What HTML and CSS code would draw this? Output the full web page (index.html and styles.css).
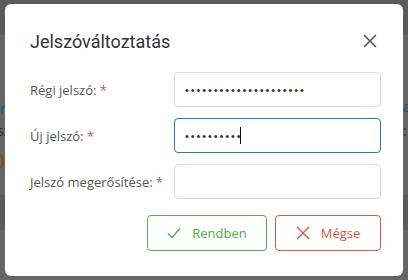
FILE: index.html
```html
<!DOCTYPE html>
<html lang="hu">
<head>
  <meta charset="UTF-8">
  <meta name="viewport" content="width=device-width, initial-scale=1.0">
  <title>Jelszóváltoztatás</title>
  <link rel="stylesheet" href="styles.css">
</head>
<body>
  <!-- page behind the backdrop -->
  <div class="page">
    <div class="band band-top"></div>
    <div class="band band-main">
      <span class="frag frag-l1">r</span>
      <span class="frag frag-l2">sz</span>
      <span class="frag frag-l3">)</span>
      <span class="frag frag-r1">a</span>
      <span class="frag frag-r2">:</span>
    </div>
    <div class="band band-mid"></div>
    <div class="band band-bottom"></div>
  </div>

  <div class="modal">
    <div class="modal-header">
      <h2 class="modal-title">Jelszóváltoztatás</h2>
      <button class="close" type="button" aria-label="Bezárás">
        <svg width="14" height="14" viewBox="0 0 14 14"><path d="M1 1L13 13M13 1L1 13" stroke="#555" stroke-width="1.6" fill="none"/></svg>
      </button>
    </div>
    <form class="form">
      <div class="row">
        <label for="oldPw">Régi jelszó: <span class="req">*</span></label>
        <input id="oldPw" class="field" type="password" value="aaaaaaaaaaaaaaaaaaaaa">
      </div>
      <div class="row">
        <label for="newPw">Új jelszó: <span class="req">*</span></label>
        <div class="field-wrap">
          <input id="newPw" class="field focused" type="password" value="aaaaaaaaaa">
          <span class="caret"></span>
        </div>
      </div>
      <div class="row">
        <label for="confirmPw">Jelszó megerősítése: <span class="req">*</span></label>
        <input id="confirmPw" class="field" type="password" value="">
      </div>
      <div class="actions">
        <button type="button" class="btn btn-ok">
          <svg width="14" height="12" viewBox="0 0 14 12"><path d="M1 6.5L5 10.5L13 1.5" stroke="#4cae4c" stroke-width="1.4" fill="none"/></svg>
          Rendben
        </button>
        <button type="button" class="btn btn-cancel">
          <svg width="14" height="14" viewBox="0 0 14 14"><path d="M1 1L13 13M13 1L1 13" stroke="#d9534f" stroke-width="1.4" fill="none"/></svg>
          Mégse
        </button>
      </div>
    </form>
  </div>
</body>
</html>
```

FILE: styles.css
```css
html, body { margin: 0; height: 100%; }
body {
  background: #666;
  font-family: "Open Sans", "Noto Sans", sans-serif;
  overflow: hidden;
}
.page { display: flex; flex-direction: column; height: 280px; }
.band { position: relative; }
.band-top { height: 35px; background: #5c5c5c; }
.band-main { height: 160px; background: #666; }
.band-mid { height: 35px; background: #5c5c5c; }
.band-bottom { flex: 1; background: #666; }
.frag { position: absolute; font-size: 14px; line-height: 16px; }
.frag-l1 { left: 0; top: 66px; color: #1f4f6e; }
.frag-l2 { left: -3px; top: 88px; color: #2b2b2b; }
.frag-l3 { left: 0; top: 117px; color: #6b4a12; }
.frag-r1 { left: 403px; top: 64px; color: #244f66; }
.frag-r2 { left: 403px; top: 88px; color: #2a2140; }

.modal {
  position: absolute;
  left: 5px; top: 4px;
  width: 398px; height: 272px;
  box-sizing: border-box;
  background: #fff;
  border-radius: 6px;
  padding: 25px 22px 0 25px;
}
.modal-header {
  display: flex; align-items: center; justify-content: space-between;
  height: 24px;
}
.modal-title {
  margin: 0;
  font-family: Roboto, sans-serif;
  font-weight: 400;
  font-size: 18px;
  color: #333;
}
.close {
  border: 0; background: none; padding: 0; margin-right: 4px;
  width: 14px; height: 14px; display: flex;
}
.form { margin-top: 19px; }
.row { display: flex; align-items: center; margin-bottom: 11px; }
.row label {
  width: 144px;
  font-size: 13px;
  color: #555;
}
.req { color: #e0474c; }
.field-wrap { position: relative; display: flex; }
.field {
  box-sizing: border-box;
  width: 207px; height: 35px;
  border: 1px solid #dcdcdc;
  border-radius: 4px;
  padding: 0 10px;
  font-size: 11px;
  letter-spacing: 1.9px;
  color: #333;
  outline: none;
}
.field.focused { border-color: #2c78c0; }
.caret {
  position: absolute;
  left: 66px; top: 9px;
  width: 1px; height: 17px;
  background: #111;
}
.actions {
  display: flex; justify-content: flex-end; gap: 8px;
  margin-top: 16px;
}
.btn {
  display: flex; align-items: center; justify-content: center; gap: 11px;
  height: 36px;
  box-sizing: border-box;
  background: #fff;
  border-radius: 4px;
  font-family: "Open Sans", sans-serif;
  font-size: 13px;
}
.btn-ok { width: 120px; border: 1px solid #4cae4c; color: #4cae4c; }
.btn-cancel { width: 106px; border: 1px solid #d9534f; color: #d9534f; }
```
